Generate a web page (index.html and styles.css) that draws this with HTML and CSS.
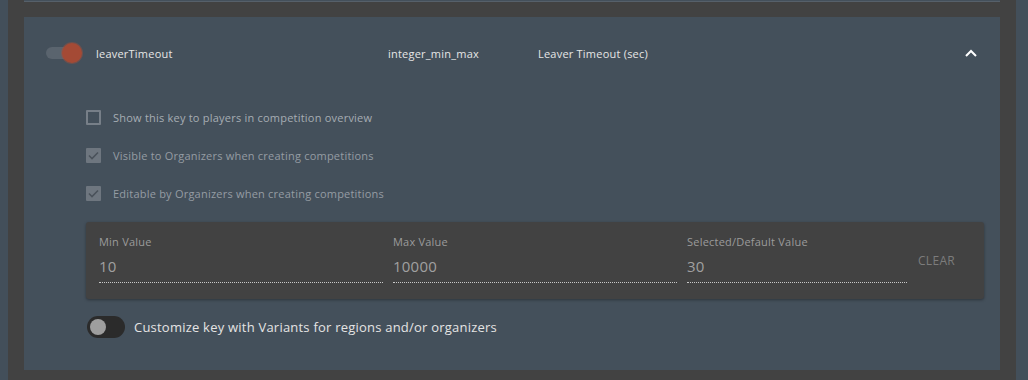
FILE: index.html
```html
<!DOCTYPE html>
<html>
<head>
<meta charset="utf-8">
<link rel="stylesheet" href="styles.css">
</head>
<body>
<div class="frame">
  <div class="panel-stub"></div>
  <section class="panel">
    <header class="panel-head">
      <span class="switch switch-on"><span class="knob"></span></span>
      <span class="key-name">leaverTimeout</span>
      <span class="key-type">integer_min_max</span>
      <span class="key-label">Leaver Timeout (sec)</span>
      <svg class="chevron" width="12" height="8" viewBox="0 0 12 8"><path d="M1 7 L6 2 L11 7" fill="none" stroke="#fff" stroke-width="2"/></svg>
    </header>
    <div class="panel-body">
      <label class="check-row">
        <span class="box"></span>
        <span class="check-text">Show this key to players in competition overview</span>
      </label>
      <label class="check-row disabled">
        <span class="box checked"><svg width="11" height="9" viewBox="0 0 11 9"><path d="M1 4.5 L4 7.5 L10 1.5" fill="none" stroke="#4a525b" stroke-width="1.6"/></svg></span>
        <span class="check-text">Visible to Organizers when creating competitions</span>
      </label>
      <label class="check-row disabled">
        <span class="box checked"><svg width="11" height="9" viewBox="0 0 11 9"><path d="M1 4.5 L4 7.5 L10 1.5" fill="none" stroke="#4a525b" stroke-width="1.6"/></svg></span>
        <span class="check-text">Editable by Organizers when creating competitions</span>
      </label>
      <div class="card">
        <div class="field wide">
          <span class="field-label">Min Value</span>
          <span class="field-value">10</span>
        </div>
        <div class="field wide">
          <span class="field-label">Max Value</span>
          <span class="field-value">10000</span>
        </div>
        <div class="field narrow">
          <span class="field-label">Selected/Default Value</span>
          <span class="field-value">30</span>
        </div>
        <span class="clear-btn">CLEAR</span>
      </div>
      <div class="variant-row">
        <span class="switch switch-off"><span class="knob"></span></span>
        <span class="variant-text">Customize key with Variants for regions and/or organizers</span>
      </div>
    </div>
  </section>
</div>
</body>
</html>
```

FILE: styles.css
```css
html, body {
  margin: 0;
  padding: 0;
  background: #434f5a;
  height: 380px;
  overflow: hidden;
  font-family: "Open Sans", "Noto Sans", sans-serif;
  letter-spacing: 0.22px;
}
.frame {
  margin: 0 12px 0 8px;
  background: #424242;
  padding: 0 16px 10px;
  display: flex;
  flex-direction: column;
  gap: 15px;
  height: 380px;
  box-sizing: border-box;
}
.panel-stub {
  height: 2px;
  background: #44505b;
  border-bottom: 1px solid #56606a;
  box-sizing: border-box;
}
.panel {
  background: #44505b;
  height: 353px;
  box-sizing: border-box;
}
.panel-head {
  height: 72px;
  display: grid;
  grid-template-columns: 50px 292px 150px 1fr 12px;
  align-items: center;
  padding: 0 23px 0 22px;
  color: #e6e6e6;
  font-size: 11px;
}
.switch {
  position: relative;
  display: inline-block;
}
.switch-on {
  width: 34px;
  height: 12px;
  border-radius: 6px;
  background: #5a646e;
}
.switch-on .knob {
  position: absolute;
  width: 20px;
  height: 20px;
  border-radius: 50%;
  background: #a44a35;
  top: -4px;
  left: 16px;
  box-shadow: 0 0 0 1px rgba(170, 80, 60, 0.4);
}
.chevron { display: block; }
.panel-body {
  padding: 9px 16px 0 62px;
}
.check-row {
  display: flex;
  align-items: center;
  gap: 12px;
  height: 38px;
  font-size: 11px;
  color: #a6adb3;
}
.check-row.disabled { color: #959ca3; }
.box {
  width: 15px;
  height: 15px;
  box-sizing: border-box;
  border: 2px solid #777f88;
  border-radius: 1px;
  display: flex;
  align-items: center;
  justify-content: center;
}
.box.checked {
  background: #6e767f;
  border: none;
}
.card {
  margin-top: 10px;
  height: 77px;
  background: #424242;
  border-radius: 3px;
  box-shadow: 0 1px 3px rgba(0, 0, 0, 0.35);
  display: flex;
  align-items: flex-start;
  gap: 10px;
  padding: 0 25px 0 13px;
  box-sizing: border-box;
}
.field {
  display: flex;
  flex-direction: column;
  padding-top: 13px;
  border-bottom: 1px dotted #c8c8c8;
  height: 47px;
}
.field.wide { width: 284px; }
.field.narrow { width: 220px; }
.field-label {
  font-size: 11px;
  color: #9b9b9b;
  line-height: 14px;
}
.field-value {
  margin-top: 7px;
  font-size: 15px;
  color: #a0a0a0;
  line-height: 20px;
}
.clear-btn {
  margin-left: 1px;
  margin-top: 30px;
  font-size: 12px;
  color: #7c7c7c;
  letter-spacing: 0.3px;
}
.variant-row {
  margin-top: 17px;
  display: flex;
  align-items: center;
  gap: 9px;
  height: 22px;
  padding-left: 1px;
}
.switch-off {
  width: 38px;
  height: 22px;
  border-radius: 11px;
  background: #2b2b2b;
}
.switch-off .knob {
  position: absolute;
  width: 16px;
  height: 16px;
  border-radius: 50%;
  background: #9e9e9e;
  top: 3px;
  left: 3px;
}
.variant-text {
  font-size: 13px;
  color: #e4e4e4;
}
```
